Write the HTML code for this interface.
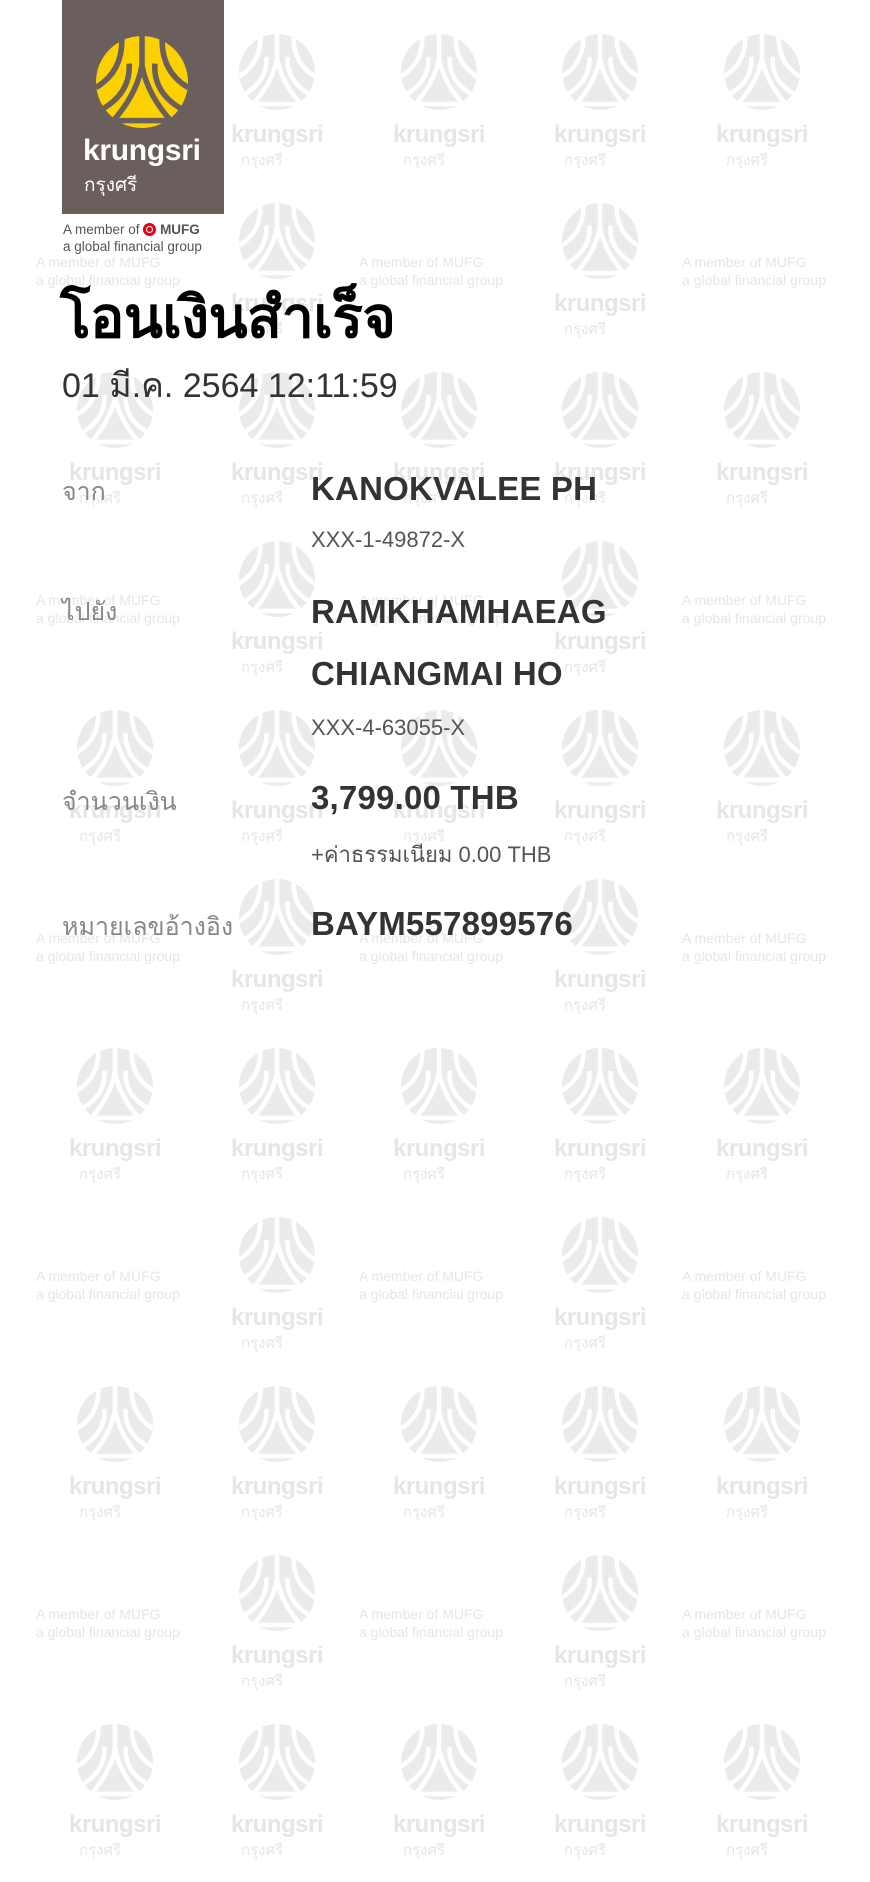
<!DOCTYPE html>
<html><head><meta charset="utf-8"><style>
*{margin:0;padding:0;box-sizing:border-box}
body{width:870px;height:1882px;background:#fff;position:relative;overflow:hidden;font-family:"Liberation Sans","Noto Sans CJK SC",sans-serif}
.t{position:absolute;width:160px;height:169px}
.t svg{position:absolute;left:42px;top:34px;width:76px;height:76px}
.t .k{position:absolute;left:0;width:160px;top:121px;text-align:center;font-weight:bold;font-size:24px;color:#e6e6e6;letter-spacing:-0.5px}
.t .th{position:absolute;left:44px;top:148px;font-size:15px;color:#e6e6e6}
.m{position:absolute;width:180px;font-size:14px;line-height:18px;color:#e6e6e6;text-align:left}
.lbl{position:absolute;left:62px;font-size:25px;color:#888;font-family:"Liberation Sans","Noto Sans CJK SC",sans-serif}
.val{position:absolute;left:311px;font-size:33px;font-weight:bold;color:#333;letter-spacing:0.2px}
.sub{position:absolute;left:311px;font-size:22px;color:#555}
</style></head><body>
<svg width="0" height="0" style="position:absolute">
<defs>
<symbol id="sym" viewBox="-50 -50 100 100">
<circle r="50" fill="currentColor"/>
<g fill="none" stroke="var(--g,#fff)" stroke-width="6" stroke-linecap="butt">
<path d="M0,-52 L0,-15"/>
<path d="M-22,-50 Q-20,-12 -50,6"/>
<path d="M22,-50 Q20,-12 50,6"/>
<path d="M0,-18 Q-6,15 -34,45"/>
<path d="M0,-18 Q6,15 34,45"/>
<path d="M-14,-20 Q-12,12 -44,30"/>
<path d="M14,-20 Q12,12 44,30"/>
<path d="M-50,42 L50,42"/>
</g>
</symbol>
</defs>
</svg>

<div style="color:#ebebeb">
<div class="t" style="left:197px;top:0"><svg><use href="#sym"/></svg><div class="k">krungsri</div><div class="th">กรุงศรี</div></div>
<div class="t" style="left:359px;top:0"><svg><use href="#sym"/></svg><div class="k">krungsri</div><div class="th">กรุงศรี</div></div>
<div class="t" style="left:520px;top:0"><svg><use href="#sym"/></svg><div class="k">krungsri</div><div class="th">กรุงศรี</div></div>
<div class="t" style="left:682px;top:0"><svg><use href="#sym"/></svg><div class="k">krungsri</div><div class="th">กรุงศรี</div></div>
<div class="m" style="left:36px;top:253px">A member of MUFG<br>a global financial group</div>
<div class="t" style="left:197px;top:169px"><svg><use href="#sym"/></svg><div class="k">krungsri</div><div class="th">กรุงศรี</div></div>
<div class="m" style="left:359px;top:253px">A member of MUFG<br>a global financial group</div>
<div class="t" style="left:520px;top:169px"><svg><use href="#sym"/></svg><div class="k">krungsri</div><div class="th">กรุงศรี</div></div>
<div class="m" style="left:682px;top:253px">A member of MUFG<br>a global financial group</div>
<div class="t" style="left:35px;top:338px"><svg><use href="#sym"/></svg><div class="k">krungsri</div><div class="th">กรุงศรี</div></div>
<div class="t" style="left:197px;top:338px"><svg><use href="#sym"/></svg><div class="k">krungsri</div><div class="th">กรุงศรี</div></div>
<div class="t" style="left:359px;top:338px"><svg><use href="#sym"/></svg><div class="k">krungsri</div><div class="th">กรุงศรี</div></div>
<div class="t" style="left:520px;top:338px"><svg><use href="#sym"/></svg><div class="k">krungsri</div><div class="th">กรุงศรี</div></div>
<div class="t" style="left:682px;top:338px"><svg><use href="#sym"/></svg><div class="k">krungsri</div><div class="th">กรุงศรี</div></div>
<div class="m" style="left:36px;top:591px">A member of MUFG<br>a global financial group</div>
<div class="t" style="left:197px;top:507px"><svg><use href="#sym"/></svg><div class="k">krungsri</div><div class="th">กรุงศรี</div></div>
<div class="m" style="left:359px;top:591px">A member of MUFG<br>a global financial group</div>
<div class="t" style="left:520px;top:507px"><svg><use href="#sym"/></svg><div class="k">krungsri</div><div class="th">กรุงศรี</div></div>
<div class="m" style="left:682px;top:591px">A member of MUFG<br>a global financial group</div>
<div class="t" style="left:35px;top:676px"><svg><use href="#sym"/></svg><div class="k">krungsri</div><div class="th">กรุงศรี</div></div>
<div class="t" style="left:197px;top:676px"><svg><use href="#sym"/></svg><div class="k">krungsri</div><div class="th">กรุงศรี</div></div>
<div class="t" style="left:359px;top:676px"><svg><use href="#sym"/></svg><div class="k">krungsri</div><div class="th">กรุงศรี</div></div>
<div class="t" style="left:520px;top:676px"><svg><use href="#sym"/></svg><div class="k">krungsri</div><div class="th">กรุงศรี</div></div>
<div class="t" style="left:682px;top:676px"><svg><use href="#sym"/></svg><div class="k">krungsri</div><div class="th">กรุงศรี</div></div>
<div class="m" style="left:36px;top:929px">A member of MUFG<br>a global financial group</div>
<div class="t" style="left:197px;top:845px"><svg><use href="#sym"/></svg><div class="k">krungsri</div><div class="th">กรุงศรี</div></div>
<div class="m" style="left:359px;top:929px">A member of MUFG<br>a global financial group</div>
<div class="t" style="left:520px;top:845px"><svg><use href="#sym"/></svg><div class="k">krungsri</div><div class="th">กรุงศรี</div></div>
<div class="m" style="left:682px;top:929px">A member of MUFG<br>a global financial group</div>
<div class="t" style="left:35px;top:1014px"><svg><use href="#sym"/></svg><div class="k">krungsri</div><div class="th">กรุงศรี</div></div>
<div class="t" style="left:197px;top:1014px"><svg><use href="#sym"/></svg><div class="k">krungsri</div><div class="th">กรุงศรี</div></div>
<div class="t" style="left:359px;top:1014px"><svg><use href="#sym"/></svg><div class="k">krungsri</div><div class="th">กรุงศรี</div></div>
<div class="t" style="left:520px;top:1014px"><svg><use href="#sym"/></svg><div class="k">krungsri</div><div class="th">กรุงศรี</div></div>
<div class="t" style="left:682px;top:1014px"><svg><use href="#sym"/></svg><div class="k">krungsri</div><div class="th">กรุงศรี</div></div>
<div class="m" style="left:36px;top:1267px">A member of MUFG<br>a global financial group</div>
<div class="t" style="left:197px;top:1183px"><svg><use href="#sym"/></svg><div class="k">krungsri</div><div class="th">กรุงศรี</div></div>
<div class="m" style="left:359px;top:1267px">A member of MUFG<br>a global financial group</div>
<div class="t" style="left:520px;top:1183px"><svg><use href="#sym"/></svg><div class="k">krungsri</div><div class="th">กรุงศรี</div></div>
<div class="m" style="left:682px;top:1267px">A member of MUFG<br>a global financial group</div>
<div class="t" style="left:35px;top:1352px"><svg><use href="#sym"/></svg><div class="k">krungsri</div><div class="th">กรุงศรี</div></div>
<div class="t" style="left:197px;top:1352px"><svg><use href="#sym"/></svg><div class="k">krungsri</div><div class="th">กรุงศรี</div></div>
<div class="t" style="left:359px;top:1352px"><svg><use href="#sym"/></svg><div class="k">krungsri</div><div class="th">กรุงศรี</div></div>
<div class="t" style="left:520px;top:1352px"><svg><use href="#sym"/></svg><div class="k">krungsri</div><div class="th">กรุงศรี</div></div>
<div class="t" style="left:682px;top:1352px"><svg><use href="#sym"/></svg><div class="k">krungsri</div><div class="th">กรุงศรี</div></div>
<div class="m" style="left:36px;top:1605px">A member of MUFG<br>a global financial group</div>
<div class="t" style="left:197px;top:1521px"><svg><use href="#sym"/></svg><div class="k">krungsri</div><div class="th">กรุงศรี</div></div>
<div class="m" style="left:359px;top:1605px">A member of MUFG<br>a global financial group</div>
<div class="t" style="left:520px;top:1521px"><svg><use href="#sym"/></svg><div class="k">krungsri</div><div class="th">กรุงศรี</div></div>
<div class="m" style="left:682px;top:1605px">A member of MUFG<br>a global financial group</div>
<div class="t" style="left:35px;top:1690px"><svg><use href="#sym"/></svg><div class="k">krungsri</div><div class="th">กรุงศรี</div></div>
<div class="t" style="left:197px;top:1690px"><svg><use href="#sym"/></svg><div class="k">krungsri</div><div class="th">กรุงศรี</div></div>
<div class="t" style="left:359px;top:1690px"><svg><use href="#sym"/></svg><div class="k">krungsri</div><div class="th">กรุงศรี</div></div>
<div class="t" style="left:520px;top:1690px"><svg><use href="#sym"/></svg><div class="k">krungsri</div><div class="th">กรุงศรี</div></div>
<div class="t" style="left:682px;top:1690px"><svg><use href="#sym"/></svg><div class="k">krungsri</div><div class="th">กรุงศรี</div></div>
</div>

<div style="position:absolute;left:62px;top:0;width:162px;height:214px;background:#6b5f5e">
  <svg style="position:absolute;left:34px;top:36px;width:92px;height:92px;color:#fcd100;--g:#6b5f5e"><use href="#sym"/></svg>
  <div style="position:absolute;left:21px;top:134px;font-size:30px;font-weight:bold;color:#fff;letter-spacing:-0.3px">krungsri</div>
  <div style="position:absolute;left:22px;top:170px;font-size:19px;color:#fff">กรุงศรี</div>
</div>
<div style="position:absolute;left:63px;top:221px;font-size:13.5px;line-height:17px;color:#555">A member of <span style="display:inline-block;width:13px;height:13px;border:3px solid #e60012;border-radius:50%;vertical-align:-2px;position:relative"><span style="position:absolute;left:1px;top:1px;width:5px;height:5px;background:#e60012;border-radius:50%"></span></span> <b style="color:#555">MUFG</b><br>a global financial group</div>

<div style="position:absolute;left:60px;top:283px;font-size:57px;font-weight:bold;color:#000;line-height:70px;letter-spacing:-0.5px">โอนเงินสำเร็จ</div>
<div style="position:absolute;left:62px;top:364px;font-size:34px;color:#333;line-height:44px">01 มี.ค. 2564 12:11:59</div>

<div class="lbl" style="top:472px">จาก</div>
<div class="val" style="top:470px">KANOKVALEE PH</div>
<div class="sub" style="top:527px">XXX-1-49872-X</div>

<div class="lbl" style="top:592px">ไปยัง</div>
<div class="val" style="top:593px">RAMKHAMHAEAG</div>
<div class="val" style="top:655px">CHIANGMAI HO</div>
<div class="sub" style="top:715px">XXX-4-63055-X</div>

<div class="lbl" style="top:782px">จำนวนเงิน</div>
<div class="val" style="top:779px">3,799.00 THB</div>
<div class="sub" style="top:837px">+ค่าธรรมเนียม 0.00 THB</div>

<div class="lbl" style="top:907px">หมายเลขอ้างอิง</div>
<div class="val" style="top:905px">BAYM557899576</div>
</body></html>
